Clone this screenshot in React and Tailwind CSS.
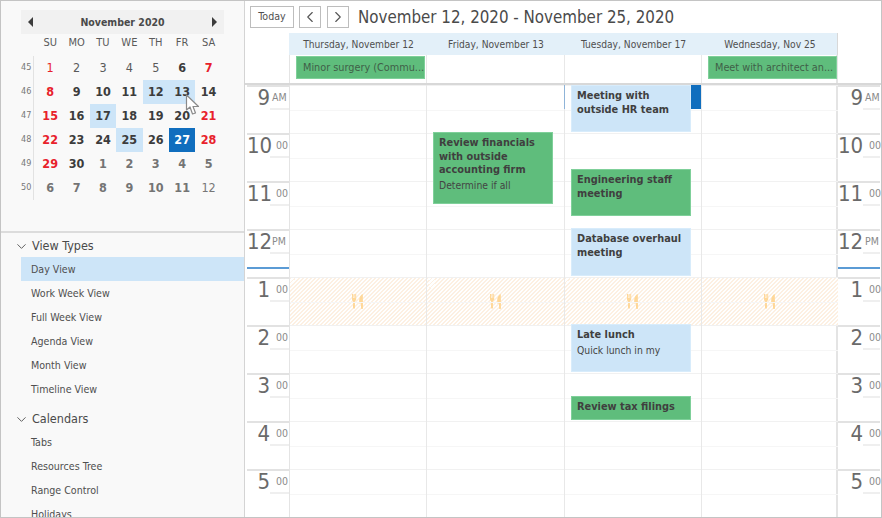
import React from 'react';
import { ChevronDown, ChevronLeft, ChevronRight } from 'lucide-react';

// Mini calendar cells: [label, style]
const dayStyles = {
  n: 'font-normal text-[#5a5a5a]',
  b: 'font-bold text-[#3c3c3c]',
  r: 'font-bold text-[#e8212b]',
  rn: 'font-normal text-[#e8212b]',
  g: 'font-bold text-[#747474]',
  gl: 'font-normal text-[#777777]',
  h: 'font-bold text-[#3c3c3c] bg-[#cde5f8]',
  s: 'font-bold text-white bg-[#106ebe]',
};

const weeks = [
  { no: 45, days: [['1', 'rn'], ['2', 'n'], ['3', 'n'], ['4', 'n'], ['5', 'n'], ['6', 'b'], ['7', 'r']] },
  { no: 46, days: [['8', 'r'], ['9', 'b'], ['10', 'b'], ['11', 'b'], ['12', 'h'], ['13', 'h'], ['14', 'b']] },
  { no: 47, days: [['15', 'r'], ['16', 'b'], ['17', 'h'], ['18', 'b'], ['19', 'b'], ['20', 'b'], ['21', 'r']] },
  { no: 48, days: [['22', 'r'], ['23', 'b'], ['24', 'b'], ['25', 'h'], ['26', 'b'], ['27', 's'], ['28', 'r']] },
  { no: 49, days: [['29', 'r'], ['30', 'b'], ['1', 'g'], ['2', 'g'], ['3', 'g'], ['4', 'g'], ['5', 'g']] },
  { no: 50, days: [['6', 'g'], ['7', 'g'], ['8', 'g'], ['9', 'g'], ['10', 'g'], ['11', 'g'], ['12', 'gl']] },
];

const weekDays = ['SU', 'MO', 'TU', 'WE', 'TH', 'FR', 'SA'];
const viewTypes = ['Day View', 'Work Week View', 'Full Week View', 'Agenda View', 'Month View', 'Timeline View'];
const calendars = ['Tabs', 'Resources Tree', 'Range Control', 'Holidays'];
const hours = [
  ['9', 'AM'], ['10', '00'], ['11', '00'], ['12', 'PM'], ['1', '00'], ['2', '00'], ['3', '00'], ['4', '00'], ['5', '00'],
];

const green = 'bg-[#5fbd7c] border border-[#7fd09a]';
const blue = 'bg-[#cde5f8] border border-[#d8ecfb]';

// Each day holds its own appointments, top is measured from 9 AM
const columns = [
  { title: 'Thursday, November 12', allDay: 'Minor surgery (Commu...', width: 'w-[137px]', events: [] },
  {
    title: 'Friday, November 13',
    width: 'w-[138px]',
    events: [
      { top: 'top-[47px] h-[72px]', color: green, title: 'Review financials with outside accounting firm', text: 'Determine if all' },
    ],
  },
  {
    title: 'Tuesday, November 17',
    width: 'w-[137px]',
    selected: true,
    events: [
      { top: 'top-0 h-[47px]', color: blue, title: 'Meeting with outside HR team' },
      { top: 'top-[84px] h-[47px]', color: green, title: 'Engineering staff meeting' },
      { top: 'top-[143px] h-[48px]', color: blue, title: 'Database overhaul meeting' },
      { top: 'top-[239px] h-[48px]', color: blue, title: 'Late lunch', text: 'Quick lunch in my' },
      { top: 'top-[311px] h-[24px]', color: green, title: 'Review tax filings' },
    ],
  },
  { title: 'Wednesday, Nov 25', allDay: 'Meet with architect an...', width: 'w-[136px]', events: [] },
];

const LunchIcon = () => (
  <svg width="12" height="15" viewBox="0 0 12 15" fill="#ffd899">
    <path d="M0 0h1v4h.6V0h1v4h.6V0h1v5.2c0 1-.6 1.6-1.3 1.9L3 13.6c0 .8-.4 1.2-1 1.2s-1-.4-1-1.2l.1-6.5C.5 6.800 0 6.200 0 5.200z" />
    <path d="M10.800 0 11 14c0 .6-.4 1-1 1s-1-.4-1-1V9.500H7.200V6C7.200 3 8.800.8 10.800 0z" />
  </svg>
);

const Cursor = () => (
  <svg className="absolute left-[184px] top-[93px]" width="15" height="23" viewBox="0 0 15 23">
    <path d="M1.500 1 1.500 16 5 13 7.500 20 10.500 19 8 12.500 13.500 12.500Z" fill="#ffffff" stroke="#8a8a8a" strokeWidth="1.200" strokeLinejoin="round" />
  </svg>
);

const MiniCalendar = () => (
  <div className="h-[232px] pt-[9px] pl-5 border-b-2 border-[#dcdcdc] relative">
    <div className="w-[203px] h-6 bg-[#f1f1f1] flex items-center justify-between px-[7px]">
      <span className="w-0 h-0 border-y-[5px] border-y-transparent border-r-[5px] border-r-[#3c3c3c]"></span>
      <span className="pt-px text-[10.500px] font-bold text-[#4a4a4a]">November 2020</span>
      <span className="w-0 h-0 border-y-[5px] border-y-transparent border-l-[5px] border-l-[#3c3c3c]"></span>
    </div>
    <div className="flex pl-4 h-[22px] pb-1 items-center">
      {weekDays.map((d) => (
        <div key={d} className="w-[26.4px] text-center text-[11px] text-[#5a5a5a]">{d}</div>
      ))}
    </div>
    {weeks.map((week) => (
      <div key={week.no} className="flex h-6">
        <div className="w-[13px] border-r border-[#e2e2e2] text-[9px] text-[#777777] flex items-center">{week.no}</div>
        <div className="w-[3px]"></div>
        {week.days.map(([label, style], i) => (
          <div key={i} className={`w-[26.4px] flex items-center justify-center text-[12.500px] ${dayStyles[style]}`}>
            {label}
          </div>
        ))}
      </div>
    ))}
    <Cursor />
  </div>
);

const NavGroup = ({ title, items, active }) => (
  <div>
    <div className="h-6 pt-[2px] flex items-center pl-[13px] text-[12.500px] text-[#4a4a4a]">
      <ChevronDown size={15} strokeWidth={1.500} className="text-[#555555] mr-[3px]" />
      {title}
    </div>
    {items.map((item) => (
      <div
        key={item}
        className={`h-6 ml-5 pl-2.5 pt-px flex items-center text-[10.600px] text-[#4f4f4f] ${item === active ? 'bg-[#cde5f8]' : ''}`}
      >
        {item}
      </div>
    ))}
  </div>
);

const TimeRuler = ({ right }) => (
  <div className="w-11 shrink-0 overflow-hidden">
    {hours.map(([h, small], i) => (
      <div key={i} className={`h-12 border-t-2 border-[#e2e2e2] flex relative ${right ? 'mr-0.5' : 'ml-0.5'}`}>
        <div className={`${right ? 'w-[25px]' : 'w-[23px]'} text-right text-[22px] leading-[22px] text-[#6a6a6a] whitespace-nowrap`}>{h}</div>
        <div className={`${right ? 'w-[17px]' : 'w-[19px]'} h-[23px] border-b-2 border-[#efefef] pt-1 text-[10.500px] leading-[13px] text-[#8a8a8a] whitespace-nowrap ${small === '00' ? 'pl-1.5' : 'pl-0.5'}`}>{small}</div>
        {h === '12' && <div className="absolute left-0 right-0 top-[36px] h-0.5 bg-[#5b9bd5]"></div>}
      </div>
    ))}
  </div>
);

const DayColumn = ({ col, last }) => (
  <div className={`${col.width} shrink-0 relative ${last ? '' : 'border-r border-[#e8e8e8]'}`}>
    {hours.map(([h], i) => (
      <div key={i} className={`h-12 border-t border-[#f1f1f1] relative ${h === '1' ? 'bg-[repeating-linear-gradient(135deg,#fdf0e2_0,#fdf0e2_1.41421px,#ffffff_1.41421px,#ffffff_2.82843px)] flex items-center justify-center' : ''}`}>
        <div className="absolute left-0 right-0 top-6 border-t border-[#f6f6f6]"></div>
        {h === '1' && <LunchIcon />}
      </div>
    ))}
    {col.selected && <div className="absolute left-[-1px] top-0 w-px h-6 bg-[#8fb4d8]"></div>}
    {col.selected && <div className="absolute right-0 top-0 w-2.5 h-6 bg-[#106ebe]"></div>}
    {col.events.map((ev) => (
      <div key={ev.title} className={`absolute left-[6px] w-[120px] px-[5px] pt-[3px] overflow-hidden text-[10.900px] leading-[13.500px] text-[#3f3f3f] ${ev.top} ${ev.color}`}>
        <div className="font-bold">{ev.title}</div>
        {ev.text && <div className="mt-[2px] text-[10.300px] text-[#444444]">{ev.text}</div>}
      </div>
    ))}
  </div>
);

const App = () => (
  <div className="w-[882px] h-[518px] border border-[#c4c4c4] bg-white flex overflow-hidden font-['DejaVu_Sans',sans-serif] [font-stretch:condensed]">
    {/* Left panel */}
    <div className="w-[244px] shrink-0 h-full bg-[#f9f9f9] border-r border-[#d4d4d4] overflow-hidden">
      <MiniCalendar />
      <NavGroup title="View Types" items={viewTypes} active="Day View" />
      <div className="h-[5px]"></div>
      <NavGroup title="Calendars" items={calendars} />
    </div>

    {/* Scheduler */}
    <div className="flex-1 min-w-0">
      <div className="h-8 flex items-center pl-[5px]">
        <button className="w-11 h-[22px] border border-[#bdbdbd] text-[10.600px] text-[#4f4f4f]">Today</button>
        <button className="w-[22px] h-[22px] ml-[5px] border border-[#bdbdbd] flex items-center justify-center text-[#555555]">
          <ChevronLeft size={18} strokeWidth={1.500} />
        </button>
        <button className="w-[22px] h-[22px] ml-1.5 border border-[#bdbdbd] flex items-center justify-center text-[#555555]">
          <ChevronRight size={18} strokeWidth={1.500} />
        </button>
        <h1 className="ml-[9px] pt-px text-[16.800px] font-normal text-[#4a4a4a] whitespace-nowrap">November 12, 2020 - November 25, 2020</h1>
      </div>

      {/* Day headers */}
      <div className="flex h-[22px] pl-11">
        <div className="flex w-[549px] bg-[#e3f0f9] border-r border-[#d8d8d8] pl-px">
          {columns.map((col) => (
            <div key={col.title} className={`${col.width} shrink-0 pt-px flex items-center justify-center text-[10.200px] text-[#4f4f4f]`}>{col.title}</div>
          ))}
        </div>
      </div>

      {/* All day row */}
      <div className="flex h-[30px] pl-11 border-b-2 border-[#d8d8d8]">
        <div className="flex w-[549px] border-l border-r-2 border-[#e4e4e4]">
          {columns.map((col, i) => (
            <div key={col.title} className={`${col.width} shrink-0 pl-[6px] pt-px ${i < 3 ? 'border-r border-[#e8e8e8]' : ''}`}>
              {col.allDay && (
                <div className={`h-[23px] w-[129px] px-[6px] pt-px flex items-center text-[10.800px] text-[#3f5f48] whitespace-nowrap overflow-hidden ${green}`}>{col.allDay}</div>
              )}
            </div>
          ))}
        </div>
      </div>

      {/* Time grid */}
      <div className="flex">
        <TimeRuler />
        <div className="flex w-[549px] border-l border-r-2 border-[#e4e4e4]">
          {columns.map((col, i) => (
            <DayColumn key={col.title} col={col} last={i === 3} />
          ))}
        </div>
        <TimeRuler right />
      </div>
    </div>
  </div>
);

export default App;
